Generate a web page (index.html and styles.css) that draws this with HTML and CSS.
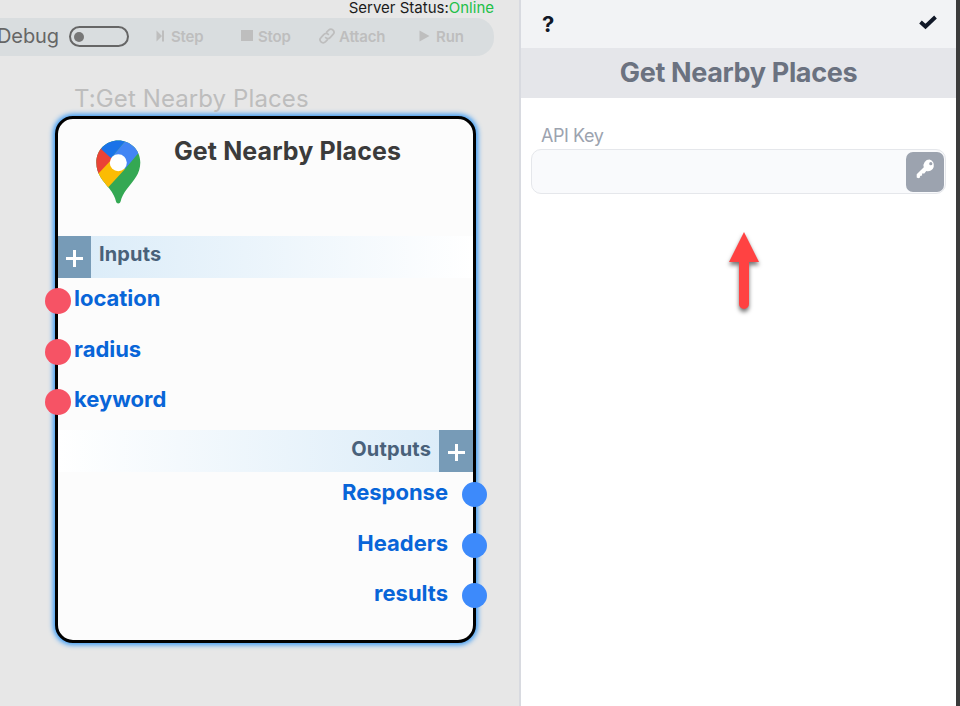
FILE: index.html
```html
<!DOCTYPE html>
<html lang="en">
<head>
<meta charset="utf-8">
<title>Get Nearby Places</title>
<link rel="stylesheet" href="styles.css">
</head>
<body>
<div class="app">
  <main class="canvas">
    <div class="status"><span>Server Status:</span><span class="online">Online</span></div>
    <div class="toolbar">
      <span class="debug">Debug</span>
      <span class="toggle"><i></i></span>
      <div class="tool step"><svg width="9" height="12" viewBox="0 0 9 12"><path d="M.5.5 6 6 .5 11.500ZM6 .5h2v11H6z"/></svg><span>Step</span></div>
      <div class="tool stop"><svg width="12" height="12" viewBox="0 0 12 12"><path d="M0 0h12v11H0z"/></svg><span>Stop</span></div>
      <div class="tool attach"><svg class="link" width="16" height="16" viewBox="0 0 24 24"><path d="M10 14.500a5 5 0 0 0 7-.5l4-4.300a4.500 4.500 0 0 0-6.500-6.500l-3 3M14 9.500a5 5 0 0 0-7 .5l-4 4.300a4.500 4.500 0 0 0 6.500 6.500l3-3"/></svg><span>Attach</span></div>
      <div class="tool run"><svg width="11" height="12" viewBox="0 0 11 12"><path d="M.5.5 10.500 6 .5 11.500z"/></svg><span>Run</span></div>
    </div>
    <div class="node-caption"><span>T:Get Nearby Places</span></div>
    <section class="node">
      <header class="node-head">
        <svg class="pin" width="45" height="65" viewBox="0 0 45 65">
          <defs><clipPath id="pin-shape"><path d="M22.300.5C10 .5.300 10 .300 22.500c0 12 7 18.500 13.200 26.300C17 53.500 19 57 20 61.500c.6 2.600 4 2.600 4.600 0 1-4.500 3-8 6.500-12.700C37.500 40.500 44.300 34 44.300 22.500 44.300 10 34.500.5 22.300.5Z"/></clipPath></defs>
          <g clip-path="url(#pin-shape)">
            <path fill="#34a853" d="M0 0h45v65H0z"/>
            <path fill="#fbbc04" d="M0 36 15 15 29 29 12.500 47 0 60z"/>
            <path fill="#ea4335" d="M0 0 6 9 17 18 2 34H0z"/>
            <path fill="#1a73e8" d="M5.500 9.500V0H30l-2 2.500L15 18z"/>
            <path fill="#4285f4" d="M28.500 2 15 18l14 11L42.500 13V0H30z"/>
          </g>
          <circle cx="22.300" cy="22.800" r="8.500" fill="#fff"/>
        </svg>
        <h1>Get Nearby Places</h1>
      </header>
      <div class="band inputs-band"><b class="plus"></b><span>Inputs</span></div>
      <ul class="ports inputs">
        <li><i></i><span>location</span></li>
        <li><i></i><span>radius</span></li>
        <li><i></i><span>keyword</span></li>
      </ul>
      <div class="band outputs-band"><span>Outputs</span><b class="plus"></b></div>
      <ul class="ports outputs">
        <li><span>Response</span><i></i></li>
        <li><span>Headers</span><i></i></li>
        <li><span>results</span><i></i></li>
      </ul>
    </section>
  </main>
  <aside class="panel">
    <div class="panel-bar">
      <span class="help">?</span>
      <svg width="18" height="15" viewBox="0 0 18 15"><path d="M1.500 7 6.500 11.500 16.500 2" fill="none" stroke="#111827" stroke-width="3.900"/></svg>
    </div>
    <h2><span>Get Nearby Places</span></h2>
    <div class="form">
      <label for="key"><span>API Key</span></label>
      <div class="field">
        <input id="key" type="text">
        <button type="button" aria-label="Key"><svg width="20" height="20" viewBox="0 0 20 20"><path fill="#fff" fill-rule="evenodd" d="M13.500.5a6 6 0 0 0-5.700 7.800L.7 15.200v3.300l1.600.8 1.800-.8v-1.600l2-.3v-2l2.200-.2 2-2.300A6 6 0 1 0 13.500.5Zm1.300 2.600a1.600 1.600 0 1 1 0 3.200 1.600 1.600 0 0 1 0-3.200Z"/></svg></button>
      </div>
    </div>
    <svg class="arrow" width="50" height="90" viewBox="0 0 50 90"><path d="M25 4 40 34H30V76a5 5 0 0 1-10 0V34H10z"/></svg>
  </aside>
</div>
</body>
</html>
```
FILE: styles.css
```css
* { box-sizing: border-box; }
body { margin: 0; overflow: hidden; font-family: Inter, sans-serif; }
h1, h2, ul { margin: 0; padding: 0; }
svg { display: block; flex: none; }
.app { display: flex; width: 960px; height: 706px; }
.canvas { width: 519px; flex: none; background: #e7e7e7; }
.status { height: 18px; padding-right: 25px; text-align: right; font-size: 15px; line-height: 16px; color: #1b1b1b; }
.online { color: #22c047; }
.toolbar { display: flex; align-items: center; width: 494px; height: 38px; background: #d9dddf; border-radius: 0 18px 18px 0; color: #bebebe; }
.debug { flex: none; width: 72px; margin: -2px 0 0 -3px; font-size: 20px; color: #666; letter-spacing: -.1px; white-space: nowrap; }
.toggle { flex: none; width: 60px; height: 21px; padding: 4px; margin-top: -1px; border: 2px solid #666; border-radius: 11px; }
.toggle i { display: block; width: 10px; height: 10px; margin-left: -1px; border-radius: 50%; background: #777; }
.tool { display: flex; align-items: center; flex: none; margin-top: -2px; font-size: 15px; font-weight: 600; letter-spacing: -.15px; white-space: nowrap; }
.tool svg { fill: #bebebe; margin-top: -1px; }
.tool .link { fill: none; stroke: #bebebe; stroke-width: 2.6; stroke-linecap: round; }
.step { width: 85px; margin-left: 27px; gap: 6px; }
.stop { width: 78px; gap: 5px; }
.attach { width: 100px; gap: 4px; }
.run { gap: 6px; }
.node-caption { height: 60px; padding: 28px 0 0 74px; font-size: 24px; line-height: 30px; letter-spacing: .1px; color: #bdbdbd; white-space: nowrap; }
.node { width: 421px; height: 527px; margin-left: 55px; border: 3px solid #000; border-radius: 18px; background: #fcfcfc; box-shadow: 0 0 5px 2px #3b9bf5; }
.node-head { display: flex; height: 117px; padding: 21px 0 0 38px; }
.node h1 { margin: -4px 0 0 33px; font-size: 25px; line-height: 30px; font-weight: 700; color: #3b3b3b; letter-spacing: .1px; white-space: nowrap; }
.band { display: flex; height: 42px; font-size: 20px; line-height: 37px; font-weight: 700; letter-spacing: .15px; color: #49617a; }
.inputs-band { background: linear-gradient(90deg, #d9ebf8, #fff); }
.outputs-band { justify-content: flex-end; line-height: 38px; background: linear-gradient(90deg, #fff, #d9ebf8); }
.inputs-band span { margin-left: 8px; }
.outputs-band span { margin-right: 8px; }
.plus { width: 34px; background: linear-gradient(#fff, #fff) center 14px / 3px 17px no-repeat, linear-gradient(#fff, #fff) center 21px / 17px 3px no-repeat, #779bb7; }
.inputs-band .plus { width: 33px; }
.ports { list-style: none; font-size: 22px; line-height: 24px; font-weight: 700; color: #0865d8; letter-spacing: -.02px; }
.ports li { display: flex; height: 50.5px; }
.ports i { flex: none; border-radius: 50%; }
.inputs { height: 152px; padding-top: 8px; }
.inputs i { width: 26px; height: 26px; margin: 2px 3px 0 -13px; background: #f65365; }
.outputs { padding-top: 8px; }
.outputs li { justify-content: flex-end; }
.outputs i { width: 25px; height: 25px; margin: 2px -14px 0 14px; background: #3d8afb; }
.panel { width: 441px; border-left: 2px solid #d8dae0; border-right: 4px solid #3b3b3b; background: #fff; }
.panel-bar { display: flex; justify-content: space-between; height: 48px; padding: 15px 19px 0 21px; background: #f2f3f5; }
.help { font-size: 22px; line-height: 18px; font-weight: 700; color: #111827; }
.panel h2 { height: 50px; background: #e5e6ea; text-align: center; font-size: 27px; line-height: 49px; font-weight: 700; letter-spacing: -.35px; color: #6b7280; }
.form { padding: 25px 10px 0; }
.form label { display: block; padding-left: 10px; height: 26px; font-size: 18px; line-height: 26px; letter-spacing: -.45px; color: #9ca3af; }
.field { display: flex; height: 45px; padding: 2px 1px 2px 0; border: 1px solid #e5e7eb; border-radius: 10px; background: #f9fafc; }
.field input { flex: 1; min-width: 0; border: 0; outline: 0; background: transparent; }
.field button { width: 38px; height: 40px; padding: 0 0 6px 1px; border: 0; border-radius: 7px; background: #9ca3af; display: flex; align-items: center; justify-content: center; }
.arrow { margin: 34px 0 0 198px; overflow: visible; fill: #ff4242; filter: drop-shadow(0 3px 2px rgba(0,0,0,.55)); }
```
